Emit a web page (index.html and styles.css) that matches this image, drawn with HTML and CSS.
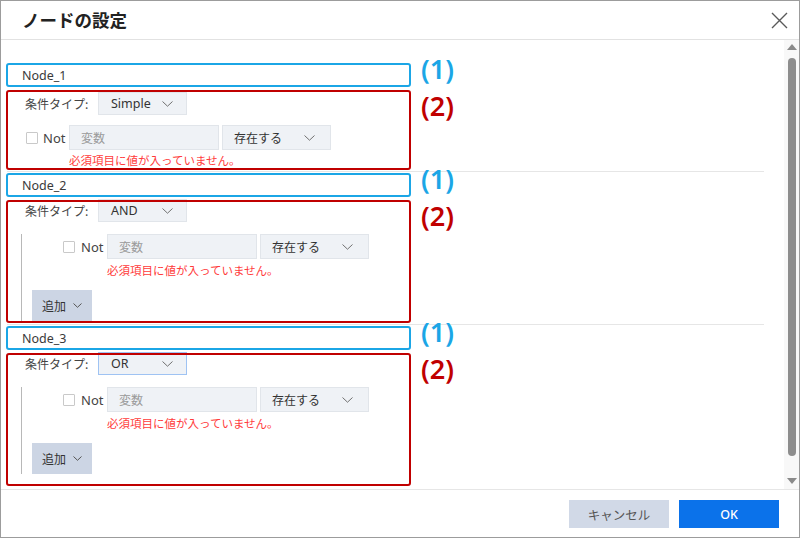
FILE: index.html
```html
<!DOCTYPE html>
<html lang="ja">
<head>
    <meta charset="UTF-8">
    <title>ノードの設定</title>
    <link rel="stylesheet" href="styles.css">
</head>
<body>

    <div class="dialog">
        <header class="dlg-head">
            <h1>ノードの設定</h1>
            <span class="close">
                <svg width="17" height="17" viewBox="0 0 17 17"><path d="M1 1 L16 16 M16 1 L1 16" stroke="#5a5a5a" stroke-width="1.4" fill="none"/></svg>
            </span>
        </header>

        <div class="dlg-main">
            <div class="scroll-body">

                <!-- Node 1 -->
                <section class="node">
                    <div class="annot-row">
                        <div class="annot blue name-box">Node_1</div>
                        <span class="tag tag-blue">(1)</span>
                    </div>
                    <div class="annot-row">
                        <div class="annot red cond-box first">
                            <div class="type-row">
                                <span class="type-label">条件タイプ:</span>
                                <div class="select sel-type">
                                    <span>Simple</span>
                                    <svg class="chev" width="11" height="6" viewBox="0 0 11 6"><polyline points="0.5,0.5 5.5,5.2 10.5,0.5" fill="none" stroke="#707070" stroke-width="1"/></svg>
                                </div>
                            </div>
                            <div class="expr-row simple">
                                <span class="check"></span>
                                <span class="not">Not</span>
                                <div class="input">変数</div>
                                <div class="select sel-op">
                                    <span>存在する</span>
                                    <svg class="chev" width="11" height="6" viewBox="0 0 11 6"><polyline points="0.5,0.5 5.5,5.2 10.5,0.5" fill="none" stroke="#707070" stroke-width="1"/></svg>
                                </div>
                            </div>
                            <p class="error simple">必須項目に値が入っていません。</p>
                        </div>
                        <span class="tag tag-red">(2)</span>
                    </div>
                </section>

                <hr class="sep">

                <!-- Node 2 -->
                <section class="node">
                    <div class="annot-row">
                        <div class="annot blue name-box">Node_2</div>
                        <span class="tag tag-blue">(1)</span>
                    </div>
                    <div class="annot-row">
                        <div class="annot red cond-box">
                            <div class="type-row lifted">
                                <span class="type-label">条件タイプ:</span>
                                <div class="select sel-type">
                                    <span>AND</span>
                                    <svg class="chev" width="11" height="6" viewBox="0 0 11 6"><polyline points="0.5,0.5 5.5,5.2 10.5,0.5" fill="none" stroke="#707070" stroke-width="1"/></svg>
                                </div>
                            </div>
                            <div class="group">
                                <div class="expr-row nested">
                                    <span class="check"></span>
                                    <span class="not">Not</span>
                                    <div class="input">変数</div>
                                    <div class="select sel-op">
                                        <span>存在する</span>
                                        <svg class="chev" width="11" height="6" viewBox="0 0 11 6"><polyline points="0.5,0.5 5.5,5.2 10.5,0.5" fill="none" stroke="#707070" stroke-width="1"/></svg>
                                    </div>
                                </div>
                                <p class="error nested">必須項目に値が入っていません。</p>
                                <button class="add-btn">追加
                                    <svg width="9" height="5" viewBox="0 0 9 5"><polyline points="0.5,0.5 4.5,4.3 8.5,0.5" fill="none" stroke="#555" stroke-width="1"/></svg>
                                </button>
                            </div>
                        </div>
                        <span class="tag tag-red">(2)</span>
                    </div>
                </section>

                <hr class="sep">

                <!-- Node 3 -->
                <section class="node">
                    <div class="annot-row">
                        <div class="annot blue name-box">Node_3</div>
                        <span class="tag tag-blue">(1)</span>
                    </div>
                    <div class="annot-row">
                        <div class="annot red cond-box last">
                            <div class="type-row lifted">
                                <span class="type-label">条件タイプ:</span>
                                <div class="select sel-type focused">
                                    <span>OR</span>
                                    <svg class="chev" width="11" height="6" viewBox="0 0 11 6"><polyline points="0.5,0.5 5.5,5.2 10.5,0.5" fill="none" stroke="#707070" stroke-width="1"/></svg>
                                </div>
                            </div>
                            <div class="group">
                                <div class="expr-row nested">
                                    <span class="check"></span>
                                    <span class="not">Not</span>
                                    <div class="input">変数</div>
                                    <div class="select sel-op">
                                        <span>存在する</span>
                                        <svg class="chev" width="11" height="6" viewBox="0 0 11 6"><polyline points="0.5,0.5 5.5,5.2 10.5,0.5" fill="none" stroke="#707070" stroke-width="1"/></svg>
                                    </div>
                                </div>
                                <p class="error nested">必須項目に値が入っていません。</p>
                                <button class="add-btn">追加
                                    <svg width="9" height="5" viewBox="0 0 9 5"><polyline points="0.5,0.5 4.5,4.3 8.5,0.5" fill="none" stroke="#555" stroke-width="1"/></svg>
                                </button>
                            </div>
                        </div>
                        <span class="tag tag-red">(2)</span>
                    </div>
                </section>

            </div>

            <div class="scrollbar">
                <span class="arrow up"></span>
                <span class="thumb"></span>
                <span class="arrow down"></span>
            </div>
        </div>

        <footer class="dlg-foot">
            <button class="btn cancel">キャンセル</button>
            <button class="btn ok">OK</button>
        </footer>
    </div>

</body>
</html>
```

FILE: styles.css
```css
body {
    margin: 0;
    padding: 0;
    background-color: #fff;
    font-family: 'Noto Sans', 'Noto Sans CJK JP', sans-serif;
    font-size: 12.5px;
    color: #333;
}

.dialog {
    width: 800px;
    height: 538px;
    box-sizing: border-box;
    border: 1px solid #9c9c9c;
    display: flex;
    flex-direction: column;
    background: #fff;
}

/* Header */
.dlg-head {
    height: 39px;
    box-sizing: border-box;
    border-bottom: 1px solid #e2e2e2;
    display: flex;
    align-items: center;
    padding: 0 11px 0 21px;
}

.dlg-head h1 {
    margin: 0;
    font-family: 'Noto Sans CJK JP', sans-serif;
    font-size: 17.5px;
    font-weight: 700;
    color: #222;
    flex: 1;
    line-height: 1;
}

.close {
    display: flex;
    width: 17px;
    height: 17px;
}

/* Main area */
.dlg-main {
    height: 449px;
    display: flex;
}

.scroll-body {
    flex: 1;
    overflow: hidden;
    padding: 23px 0 0 5px;
}

.scrollbar {
    width: 15px;
    background: #f8f8f8;
    display: flex;
    flex-direction: column;
    align-items: center;
}

.arrow {
    width: 0;
    height: 0;
    border-left: 5px solid transparent;
    border-right: 5px solid transparent;
}

.arrow.up {
    margin-top: 4px;
    border-bottom: 6px solid #8a8a8a;
}

.arrow.down {
    margin-top: 22px;
    border-top: 6px solid #8a8a8a;
}

.thumb {
    margin-top: 8px;
    width: 8px;
    height: 398px;
    border-radius: 4px;
    background: #8d8d8d;
}

/* Annotation boxes */
.annot-row {
    display: flex;
    align-items: flex-start;
}

.annot-row + .annot-row {
    margin-top: 3px;
}

.annot {
    position: relative;
    width: 405px;
    box-sizing: border-box;
    padding: 2px;
}

.annot::after {
    content: '';
    position: absolute;
    top: 0;
    left: 0;
    right: 0;
    bottom: 0;
    border: 2px solid;
    border-radius: 3px;
    pointer-events: none;
}

.annot.blue::after {
    border-color: #1ba6e6;
}

.annot.red::after {
    border-color: #c00000;
}

.tag {
    margin-left: 10px;
    font-family: 'Noto Sans', sans-serif;
    font-size: 27px;
    font-weight: 600;
    line-height: 30px;
}

.tag-blue {
    color: #1ba6e6;
    margin-top: -9px;
}

.tag-red {
    color: #c00000;
    margin-top: 1px;
}

.sep {
    margin: 1px 0 1px 1px;
    width: 757px;
    height: 0;
    border: none;
    border-top: 1px solid #e6e6e6;
}

/* Node content */
.name-box {
    height: 24px;
    padding-left: 16px;
    display: flex;
    align-items: center;
    font-size: 12.5px;
    color: #3a3a3a;
}

.cond-box {
    padding: 2px;
}

.cond-box.first {
    padding-bottom: 3px;
}

.cond-box.last {
    padding-bottom: 12px;
}

.type-row {
    display: flex;
    align-items: center;
    height: 23px;
    padding-left: 17px;
}

.type-row.lifted {
    margin-top: -3px;
}

.type-label {
    width: 73px;
    font-family: 'Noto Sans CJK JP', sans-serif;
    font-size: 12px;
    color: #444;
}

.select {
    display: flex;
    align-items: center;
    box-sizing: border-box;
    background: #eff2f6;
    border: 1px solid #e1e5ea;
    color: #333;
}

.select .chev {
    margin-left: auto;
}

.sel-type {
    width: 89px;
    height: 23px;
    padding: 0 13px 0 12px;
}

.sel-type.focused {
    border-color: #9fc3f3;
}

.sel-op {
    width: 109px;
    height: 25px;
    padding: 0 15px 0 11px;
    font-family: 'Noto Sans CJK JP', sans-serif;
    font-size: 12px;
}

.expr-row {
    display: flex;
    align-items: center;
    height: 25px;
}

.expr-row.simple {
    margin-top: 10px;
    padding-left: 18px;
}

.expr-row.nested {
    margin-top: 12px;
    padding-left: 41px;
}

.check {
    width: 12px;
    height: 12px;
    box-sizing: border-box;
    border: 1px solid #c9c9c9;
    border-radius: 1px;
    background: #fff;
    margin-right: 5px;
}

.nested .check {
    margin-right: 6px;
}

.not {
    width: 26px;
    font-size: 13px;
    color: #444;
}

.input {
    width: 150px;
    height: 25px;
    box-sizing: border-box;
    margin-right: 3px;
    padding-left: 11px;
    background: #eff2f6;
    border: 1px solid #e1e5ea;
    display: flex;
    align-items: center;
    font-family: 'Noto Sans CJK JP', sans-serif;
    font-size: 12px;
    color: #9a9a9a;
}

.error {
    margin: 3px 0 0 0;
    font-family: 'Noto Sans CJK JP', sans-serif;
    font-size: 11.5px;
    line-height: 14px;
    color: #ff3b3b;
}

.error.simple {
    margin-left: 61px;
}

.error.nested {
    margin-top: 4px;
    margin-left: 85px;
}

.group {
    margin-left: 13px;
    border-left: 1px solid #b8b8b8;
}

.add-btn {
    display: flex;
    align-items: center;
    gap: 7px;
    margin: 13px 0 0 10px;
    width: 60px;
    height: 31px;
    padding: 0 0 0 10px;
    border: none;
    background: #ccd5e4;
    font-family: 'Noto Sans CJK JP', sans-serif;
    font-size: 12px;
    color: #333;
}

/* Footer */
.dlg-foot {
    flex: 1;
    border-top: 1px solid #e6e6e6;
    display: flex;
    justify-content: flex-end;
    align-items: flex-start;
    gap: 10px;
    padding: 10px 20px 0 0;
}

.btn {
    width: 100px;
    height: 28px;
    border: none;
    font-family: 'Noto Sans', 'Noto Sans CJK JP', sans-serif;
    font-size: 12.5px;
}

.btn.cancel {
    background: #d1d9e7;
    color: #555;
}

.btn.ok {
    background: #0b72ea;
    color: #fff;
    font-weight: 500;
}
```
